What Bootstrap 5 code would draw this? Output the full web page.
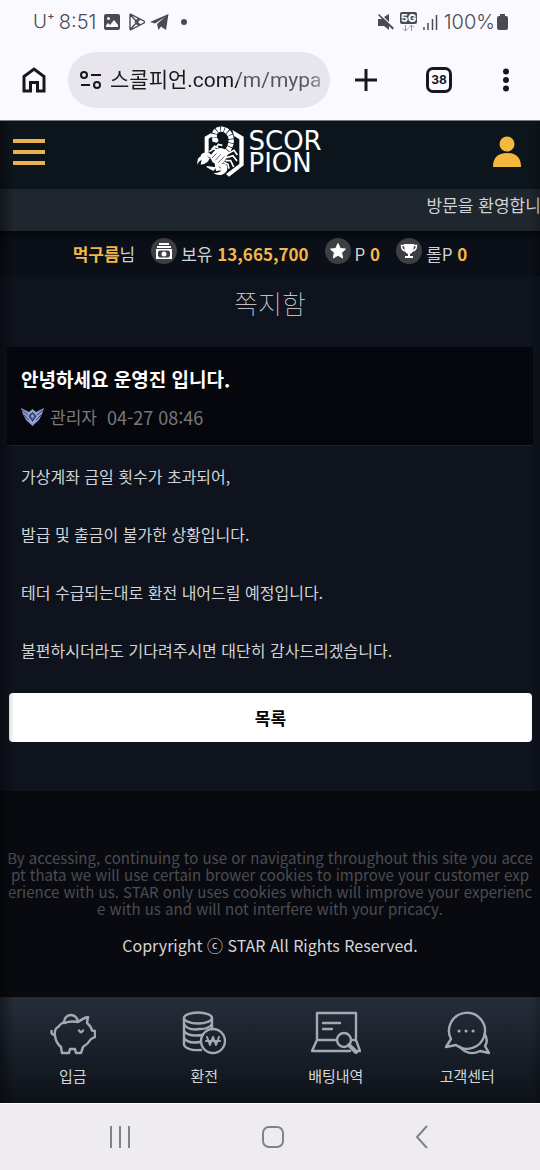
<!DOCTYPE html>
<html lang="ko">
<head>
<meta charset="utf-8">
<meta name="viewport" content="width=device-width, initial-scale=1">
<title>쪽지함</title>
<link href="https://cdn.jsdelivr.net/npm/bootstrap@5.3.0/dist/css/bootstrap.min.css" rel="stylesheet">
<style>
  body { font-family: "Noto Sans CJK KR", sans-serif; background: #0e131d; color: #d2d3d6; font-size: 17px; line-height: 24px; }
  button.bare { background: none; border: 0; padding: 0; color: inherit; display: flex; }
  svg { display: block; flex: none; }
  .phone-top { background: #faf9ff; color: #18181c; font-family: Roboto, "Noto Sans CJK KR", sans-serif; border-bottom: 1px solid #777c83; }
  .status { height: 42px; padding: 2px 32px 0 33px; color: #4b4a50; font-size: 20px; font-family: Inter, sans-serif; font-weight: 300; gap: 8px; }
  .status .tight { margin-left: -4px; }
  .signals { gap: 6px; }
  .carrier { font-size: 19px; }
  .browser { height: 78px; padding: 0 28px 2px 20px; }
  .address { height: 56px; background: #e8e6ec; border-radius: 28px; padding: 0 10px 0 12px; margin: 0 24px 0 20px; min-width: 0; }
  .address input { border: 0; outline: 0; padding: 0; width: 0; min-width: 0; font-size: 21px; line-height: 32px;
    background: linear-gradient(90deg, #1b1b1f 128px, #56555b 128px, #56555b 196px, #a5a4aa 212px); -webkit-background-clip: text; background-clip: text; color: transparent; }
  .tabs { width: 26px; height: 26px; border: 3px solid #18181c !important; border-radius: 7px; font: 700 12px/20px Inter, sans-serif; justify-content: center; }
  .site::after { content: ""; position: absolute; inset: 0; pointer-events: none;
    background: linear-gradient(90deg, rgba(0,0,0,.4), transparent 14px, transparent calc(100% - 10px), rgba(0,0,0,.2)); }
  .site-head { height: 68px; background: #0d151c; padding: 0 18px 6px 13px; }
  .brand { color: #fff; width: 146px; }
  .brand-name { font: 26px/22px "DejaVu Sans", sans-serif; }
  .notice { height: 42px; background: #20262d; padding: 4px 0 0 79%; white-space: nowrap; }
  .wallet { height: 45px; background: #0b0f17; box-shadow: inset 0 6px 6px -3px #05070b; font-size: 17px; gap: 16px; white-space: nowrap; }
  .wallet svg { margin-bottom: 5px; }
  .gold { color: #f4b64a; font-weight: 700; }
  .page-title { font-size: 26px; line-height: 36px; font-weight: 100; margin: 9px 0 26px; color: #d9dadd; }
  .message { margin: 0 7px; }
  .message-head { background: #06070c; border-bottom: 1px solid #1b2029; padding: 19px 14px 15px; }
  .message-head h2 { font-size: 19px; line-height: 26px; font-weight: 700; color: #fff; margin: 0 0 12px; }
  .meta { color: #77787c; gap: 6px; line-height: 26px; }
  .meta time { font-size: 18px; }
  .message-text { padding: 18px 14px 31px; font-size: 16px; }
  .message-text p { margin: 0 0 34px; line-height: 24px; }
  .message-text p:last-child { margin: 0; }
  .list-btn { background: #fff; color: #000; font-weight: 700; font-size: 17px; height: 49px; margin: 0 8px 49px 9px; border-radius: 4px; border: 0; }
  .site-foot { background: #080a10; padding: 58px 0 38px; }
  .site-foot .terms { color: #4b4d52; font-size: 15px; line-height: 17px; margin-bottom: 16px; white-space: nowrap; }
  .site-foot .rights { color: #d6d6d8; font-size: 16px; line-height: 24px; margin: 0; }
  .dock { background: linear-gradient(#262d39, #0d1219); height: 106px; padding: 13px 7px 0; border-top: 1px solid #252b35; font-size: 15px; }
  .dock a { color: #d4d6da; text-decoration: none; gap: 9px; flex: 1 1 0; }
  .dock svg { color: #a5a9b1; }
  .system { background: #eeecf1; color: #828187; height: 67px; padding: 0 110px 0 108px; border-top: 1px solid #fff; }
</style>
</head>
<body>
<div class="d-flex flex-column min-vh-100">
  <header class="phone-top">
    <div class="status d-flex align-items-center">
      <span class="carrier">U⁺</span><span class="tight">8:51</span>
      <svg width="16" height="16" viewBox="0 0 16 16"><path fill="currentColor" fill-rule="evenodd" d="M2 0h12q2 0 2 2v12q0 2-2 2H2q-2 0-2-2V2q0-2 2-2zm1 13h11v-2l-4-5-4 5-2-2-2 2.500v1.500zM4.500 3a1.500 1.500 0 100 3 1.500 1.500 0 000-3z"/></svg>
      <svg width="18" height="18" viewBox="0 0 18 18" fill="none" stroke="currentColor" stroke-width="1.400" stroke-linejoin="round"><path d="M2 2v14q0 1 1 .7L16 10q1-1 0-2L3 1.300Q2 1 2 2zM2.500 2L12 12M2.500 16L12 6M7 9l4-4M7 9l4 4"/></svg>
      <svg class="tight" width="19" height="18" viewBox="0 0 19 18"><path fill="currentColor" d="M0 9L18.500 1 16 17l-5-3.500L8.500 17 7 11l8-7-10 6.500z"/></svg>
      <svg class="ms-1" width="6" height="6"><circle cx="3" cy="3" r="3" fill="currentColor"/></svg>
      <div class="signals d-flex align-items-center ms-auto">
        <svg width="16" height="16" viewBox="0 0 16 16"><path fill="currentColor" d="M0 5h4l7 7v4l-5-4H0zM6 3l5-3v8zM1 0l15 14-1.500 1.500L0 1z"/></svg>
        <svg width="17" height="20" viewBox="0 0 17 20"><rect width="17" height="12" rx="2" fill="currentColor"/><text x="8.500" y="10" text-anchor="middle" font-size="11" font-weight="800" fill="#fff">5G</text><path fill="none" stroke="#99989e" d="M5.500 13v6M3 16.500L5.500 19 8 16.500M11.500 19v-6M9 15.500L11.500 13 14 15.500"/></svg>
        <svg width="15" height="15" viewBox="0 0 15 15" stroke="currentColor" stroke-width="1.500"><path d="M1 15v-3M5 15V8M9.500 15V4M13.500 15V0"/></svg>
        <span>100%</span>
        <svg class="tight" width="11" height="16"><path fill="currentColor" d="M3 0h5v2h1q2 0 2 2v10q0 2-2 2H2q-2 0-2-2V4q0-2 2-2h1z"/></svg>
      </div>
    </div>
    <div class="browser d-flex align-items-center">
      <button class="bare" aria-label="홈"><svg width="28" height="28" viewBox="0 0 28 28" fill="none" stroke="currentColor" stroke-width="3"><path d="M4 10.500L14 3l10 7.500V25h-6.500v-8.500h-7V25H4z"/></svg></button>
      <div class="address d-flex align-items-center flex-grow-1">
        <svg width="22" height="18" viewBox="0 0 22 18" fill="none" stroke="currentColor" stroke-width="2"><circle cx="4" cy="4" r="3"/><path d="M11 4h10M1 14h9"/><circle cx="17" cy="14" r="3"/></svg>
        <input class="flex-grow-1 ms-2" type="text" aria-label="주소" value="스콜피언.com/m/mypage">
      </div>
      <div class="d-flex align-items-center">
        <button class="bare" aria-label="새 탭"><svg width="24" height="24" viewBox="0 0 24 24" stroke="currentColor" stroke-width="3"><path d="M1 12h22M12 1v22"/></svg></button>
        <button class="bare tabs mx-5" aria-label="열린 탭">38</button>
        <button class="bare" aria-label="메뉴"><svg width="12" height="26" viewBox="0 0 12 26" fill="currentColor"><circle cx="6" cy="4.500" r="3"/><circle cx="6" cy="13" r="3"/><circle cx="6" cy="21.500" r="3"/></svg></button>
      </div>
    </div>
  </header>

  <div class="site position-relative d-flex flex-column flex-grow-1">
    <div class="site-head d-flex align-items-center justify-content-between">
      <button class="bare" aria-label="전체 메뉴"><svg width="32" height="26" viewBox="0 0 32 26" fill="#e9b44e"><path d="M0 0h32v4H0zM0 11h32v4H0zM0 22h32v4H0z"/></svg></button>
      <a class="brand d-flex align-items-center text-decoration-none gap-1" href="#">
        <svg width="49" height="52" viewBox="45 24 145 156">
          <g fill="#fff"><path d="M70 56l20-11 3 10-11 7v42l-12 2zM153 36l34 20v86l-44 34-9-8 40-30V64l-16-10zM76 144l29 4-9 11-20-11z"/>
          <path d="M88 112q24-35 48-14 8 24-19 42-30 2-29-28z"/>
          <path d="M84 105Q62 99 57 116q-10 2-9 24 3-11 13-15l-3 15q22-3 26-18l14-3zM101 126q16 0 16 12 18-5 21 10 2 15-16 22-14 4-26-5 18 1 24-8l-16 2q-5-16-3-33z"/></g>
          <path d="M102 70Q93 44 109 36t32 7q17 22 1 50l-25 30" fill="none" stroke="#fff" stroke-width="16" stroke-dasharray="10 2"/>
          <path d="M96 58q-5 13 8 16 10-2 6-12z" fill="#fff"/>
          <path d="M84 101l14-9 8 4M91 95l9-10 11 5M105 88l6-9 12 3M136 109l22-12 10 14M135 119l20-6 12 16M132 128l16 0 9 19M127 133l13 6 3 13" fill="none" stroke="#fff" stroke-width="5"/>
          <path d="M92 120l14-14M102 127l16-18M111 134l18-19M79 116l9 4M112 146l7 5" stroke="#0d151c" stroke-width="2"/>
        </svg>
        <span class="brand-name">SCOR<br>PION</span>
      </a>
      <button class="bare" aria-label="내 정보"><svg width="30" height="32" viewBox="0 0 30 32" fill="#f6b73e"><circle cx="15" cy="8" r="7.500"/><path d="M1 31q0-14 14-14t14 14z"/></svg></button>
    </div>
    <div class="notice overflow-hidden">방문을 환영합니다.</div>
    <div class="wallet d-flex justify-content-center align-items-center">
      <span><span class="gold">먹구름</span>님</span>
      <span class="d-flex align-items-center gap-1"><svg width="26" height="26" viewBox="0 0 26 26"><circle cx="13" cy="13" r="13" fill="#3d3f43"/><path fill="#fff" fill-rule="evenodd" d="M8 5h10v2H8zM6 8h14v2H6zM5 11h16v10H5zm2 3v4l1.500 1.500h9L19 18v-4l-1.500-1.500h-9z"/><circle cx="13" cy="16" r="2.500" fill="#fff"/></svg><span>보유 <span class="gold">13,665,700</span></span></span>
      <span class="d-flex align-items-center gap-1"><svg width="26" height="26" viewBox="0 0 26 26"><circle cx="13" cy="13" r="13" fill="#3d3f43"/><path fill="#fff" stroke="#fff" stroke-linejoin="round" d="M13 5.500l2.300 5 5.200.6-3.900 3.600 1.100 5.300-4.700-2.700L8.300 20l1.100-5.300-3.900-3.600 5.200-.6z"/></svg><span>P <span class="gold">0</span></span></span>
      <span class="d-flex align-items-center gap-1"><svg width="26" height="26" viewBox="0 0 26 26"><circle cx="13" cy="13" r="13" fill="#3d3f43"/><path fill="#fff" d="M8 6h10q0 9-4 10v2h3v2H9v-2h3v-2Q8 15 8 6z"/><path fill="none" stroke="#fff" stroke-width="1.500" d="M9 7.500H5.500q0 5 4.500 5.500M17 7.500h3.500q0 5-4.500 5.500"/></svg><span>롤P <span class="gold">0</span></span></span>
    </div>

    <main class="d-flex flex-column">
      <h1 class="page-title text-center">쪽지함</h1>
      <article class="message">
        <div class="message-head">
          <h2>안녕하세요 운영진 입니다.</h2>
          <div class="meta d-flex align-items-center">
            <svg width="23" height="20" viewBox="0 0 23 20"><path fill="#8e9ad0" d="M0 1l8 4 3.500-3L15 5l8-4-2 6-3 6-6.500 6L5 13 2 7z"/><path fill="#34456e" stroke="#b9c8ee" d="M11.500 4l5 5-5 7-5-7z"/><path fill="#7e9fd5" d="M11.500 7l2 2-2 3-2-3z"/><path d="M1 3l6 5M3 8l5 5M22 3l-6 5M20 8l-5 5" stroke="#38416f"/></svg>
            <span>관리자</span><time class="ms-1">04-27 08:46</time>
          </div>
        </div>
        <div class="message-text">
          <p>가상계좌 금일 횟수가 초과되어,</p>
          <p>발급 및 출금이 불가한 상황입니다.</p>
          <p>테더 수급되는대로 환전 내어드릴 예정입니다.</p>
          <p>불편하시더라도 기다려주시면 대단히 감사드리겠습니다.</p>
        </div>
      </article>
      <button class="list-btn" type="button">목록</button>
    </main>

    <footer class="site-foot text-center flex-grow-1">
      <p class="terms">By accessing, continuing to use or navigating throughout this site you acce<br>pt thata we will use certain brower cookies to improve your customer exp<br>erience with us. STAR only uses cookies which will improve your experienc<br>e with us and will not interfere with your pricacy.</p>
      <p class="rights">Copryright ⓒ STAR All Rights Reserved.</p>
    </footer>

    <nav class="dock d-flex" aria-label="바로가기">
      <a href="#" class="d-flex flex-column align-items-center"><svg width="46" height="44" viewBox="0 0 46 44" fill="none" stroke="currentColor" stroke-width="2.400" stroke-linejoin="round" stroke-linecap="round"><path d="M14 12a7 7.500 0 0114-1M14 12q7-2.500 14-1 5-4 10-5l-1 6q4 3 5 7.500l3 .5v6l-4 2q-3 5-8 8l-2 6h-5l-1-4h-5l-1 4h-7l-1-6q-5-4-6-11t3-9q2-3 6-5"/><path d="M5 24q-4 0-3.500-4M29 19.500q2 3.500 4 0"/></svg><span>입금</span></a>
      <a href="#" class="d-flex flex-column align-items-center"><svg width="44" height="44" viewBox="0 0 44 44" fill="none" stroke="currentColor" stroke-width="2.400" stroke-linecap="round" stroke-linejoin="round"><ellipse cx="16" cy="7" rx="14" ry="5.500"/><path d="M2 7v27q3 6 17 5M30 7v11M2 13q4 7 16 5 9 0 12-5M2 20q4 6 19 4M2 27q4 6 16 4"/><circle cx="31" cy="30" r="12"/><path d="M25 26l3 8 3-8 3 8 3-8M24 30h14" stroke-width="2"/></svg><span>환전</span></a>
      <a href="#" class="d-flex flex-column align-items-center"><svg width="50" height="44" viewBox="0 0 50 44" fill="none" stroke="currentColor" stroke-width="2.400" stroke-linejoin="round" stroke-linecap="round"><path d="M6 29V2h39v25M6 29h20M6 29L1 40h38M45 29l4 11h-4M12 12h17M12 18h9M42 29h3"/><circle cx="33" cy="29" r="7"/><path d="M38 34l7 7" stroke-width="4"/></svg><span>배팅내역</span></a>
      <a href="#" class="d-flex flex-column align-items-center"><svg width="46" height="44" viewBox="0 0 46 44" fill="none" stroke="currentColor" stroke-width="2.400" stroke-linejoin="round"><path d="M7 28A18 18 0 1112 34L2 36z"/><path d="M40 22q5 7 1 13l4 7-9-2q-12 6-21-5"/><path d="M15 20h.1M22 20h.1M29 20h.1" stroke-width="3" stroke-linecap="round"/></svg><span>고객센터</span></a>
    </nav>
  </div>

  <div class="system d-flex align-items-center justify-content-between">
    <button class="bare" aria-label="최근 앱"><svg width="24" height="24" viewBox="0 0 24 24" stroke="currentColor" stroke-width="2"><path d="M3 1v22M12 1v22M21 1v22"/></svg></button>
    <button class="bare" aria-label="홈 화면"><svg width="24" height="24" viewBox="0 0 24 24"><rect x="2" y="2" width="20" height="20" rx="6" fill="none" stroke="currentColor" stroke-width="2"/></svg></button>
    <button class="bare" aria-label="뒤로"><svg width="16" height="24" viewBox="0 0 16 24"><path d="M13 1L3 12l10 11" fill="none" stroke="currentColor" stroke-width="2"/></svg></button>
  </div>
</div>
<script src="https://cdn.jsdelivr.net/npm/bootstrap@5.3.0/dist/js/bootstrap.bundle.min.js"></script>
</body>
</html>
